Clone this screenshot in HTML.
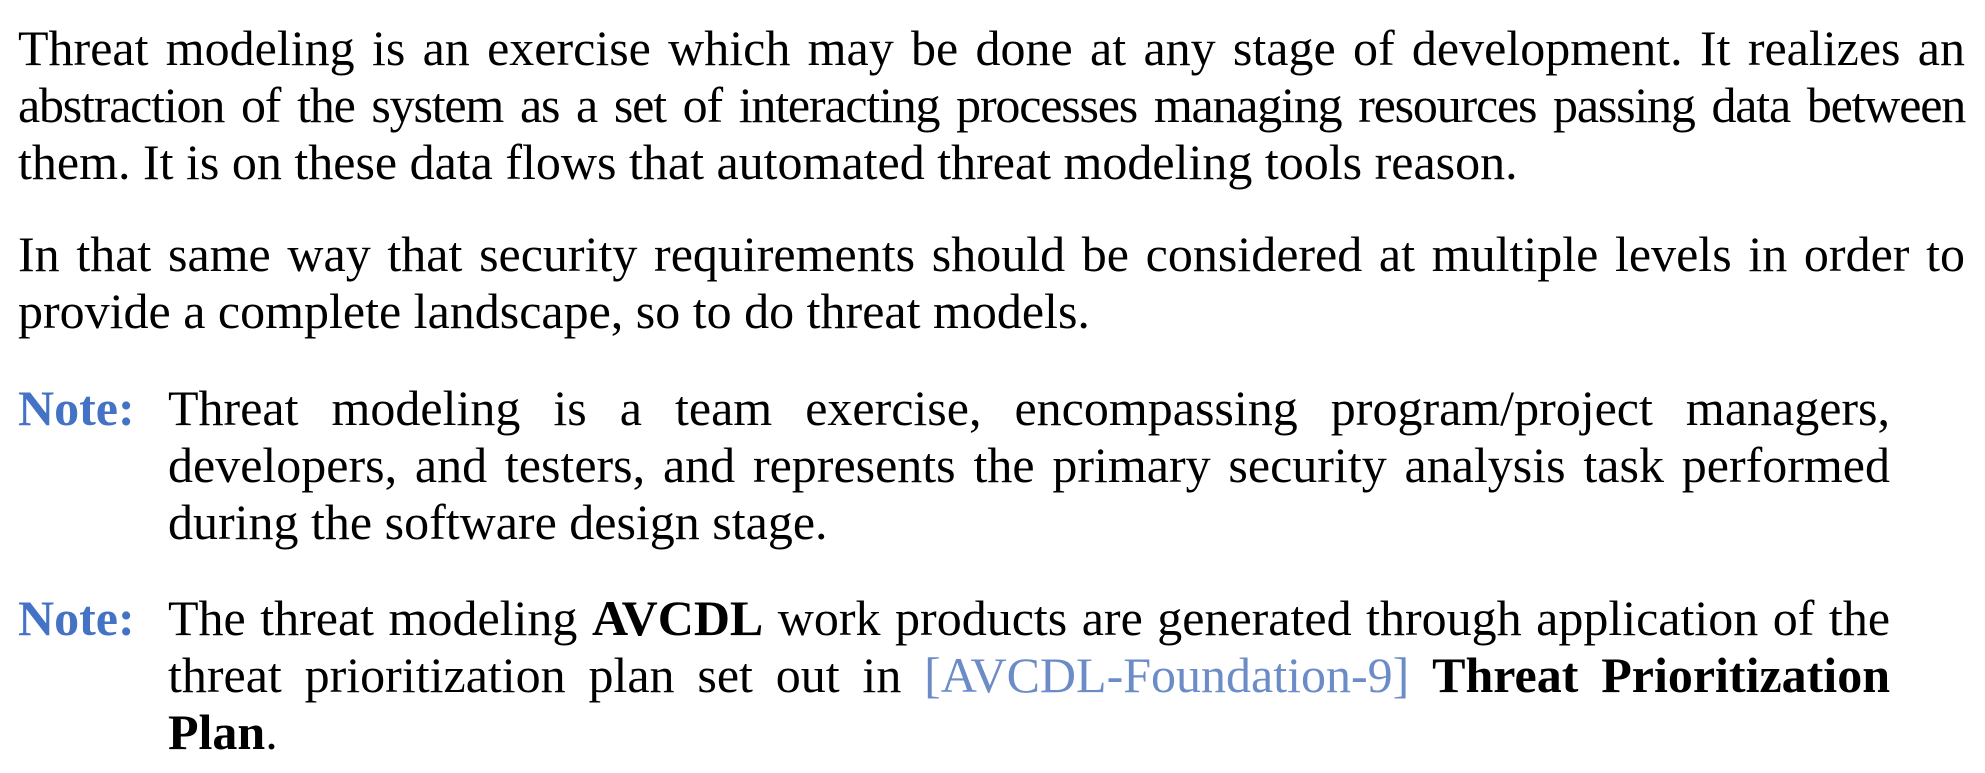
<!DOCTYPE html>
<html><head><meta charset="utf-8"><style>
html,body{margin:0;padding:0;background:#fff;width:1985px;height:773px;overflow:hidden}
body{font-family:"Liberation Serif","Times New Roman",serif;font-size:50px;line-height:57px;color:#000;position:relative}
.p{position:absolute;left:18px;width:1947px}
.n{position:absolute;left:168px;width:1722px}
.j{text-align:justify;text-align-last:justify;white-space:nowrap}
.l{white-space:nowrap}
.lab{position:absolute;left:18px;color:#4472C4;font-weight:bold}
.lk{color:#6c8cc8}
</style></head><body>
<div class="p" style="top:20px">
<div class="j">Threat modeling is an exercise which may be done at any stage of development. It realizes an</div>
<div class="j" style="letter-spacing:-1.2px;word-spacing:-2px">abstraction of the system as a set of interacting processes managing resources passing data between</div>
<div class="l">them. It is on these data flows that automated threat modeling tools reason.</div>
</div>
<div class="p" style="top:226px">
<div class="j">In that same way that security requirements should be considered at multiple levels in order to</div>
<div class="l">provide a complete landscape, so to do threat models.</div>
</div>
<div class="lab" style="top:380px">Note:</div>
<div class="n" style="top:380px">
<div class="j">Threat modeling is a team exercise, encompassing program/project managers,</div>
<div class="j">developers, and testers, and represents the primary security analysis task performed</div>
<div class="l">during the software design stage.</div>
</div>
<div class="lab" style="top:590px">Note:</div>
<div class="n" style="top:590px">
<div class="j">The threat modeling <b>AVCDL</b> work products are generated through application of the</div>
<div class="j">threat prioritization plan set out in <span class="lk">[AVCDL-Foundation-9]</span> <b>Threat Prioritization</b></div>
<div class="l"><b>Plan</b>.</div>
</div>
</body></html>
